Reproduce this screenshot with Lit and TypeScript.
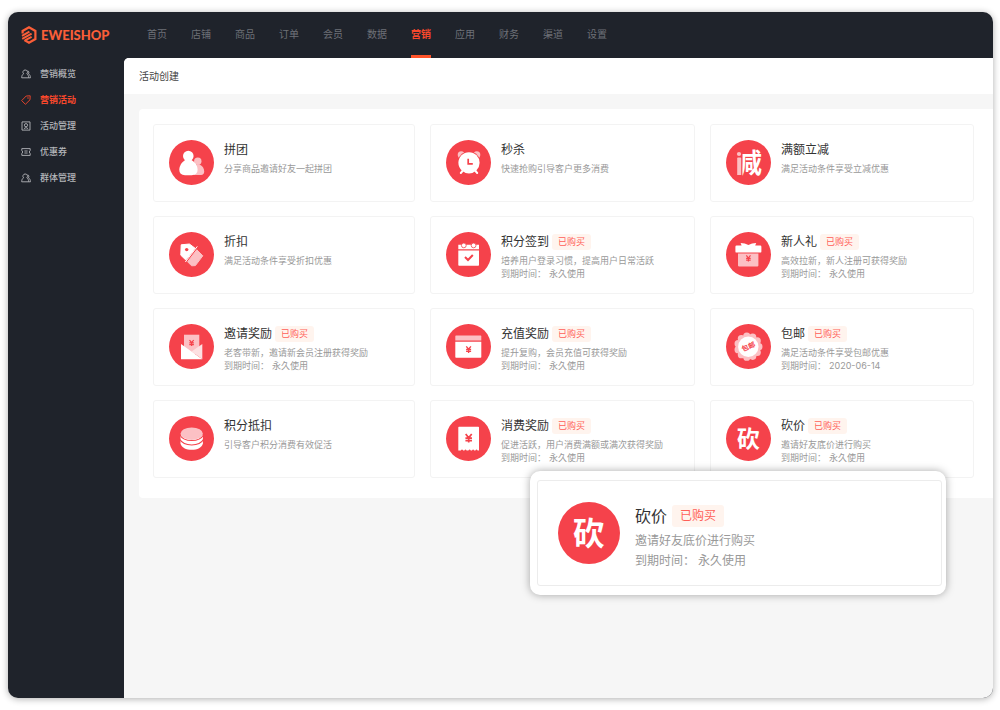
import { LitElement, html, svg, css, nothing, type TemplateResult } from "lit";
import { customElement, property } from "lit/decorators.js";
import { classMap } from "lit/directives/class-map.js";

interface Activity {
  icon: string;
  title: string;
  desc: string;
  expires?: string;
}

const NAV = ["首页", "店铺", "商品", "订单", "会员", "数据", "营销", "应用", "财务", "渠道", "设置"];

const MENU = [
  { icon: "people", label: "营销概览" },
  { icon: "tag", label: "营销活动" },
  { icon: "badge", label: "活动管理" },
  { icon: "ticket", label: "优惠券" },
  { icon: "people", label: "群体管理" },
];

const ACTIVITIES: Activity[] = [
  { icon: "group", title: "拼团", desc: "分享商品邀请好友一起拼团" },
  { icon: "clock", title: "秒杀", desc: "快速抢购引导客户更多消费" },
  { icon: "minus", title: "满额立减", desc: "满足活动条件享受立减优惠" },
  { icon: "discount", title: "折扣", desc: "满足活动条件享受折扣优惠" },
  { icon: "calendar", title: "积分签到", desc: "培养用户登录习惯，提高用户日常活跃", expires: "永久使用" },
  { icon: "gift", title: "新人礼", desc: "高效拉新，新人注册可获得奖励", expires: "永久使用" },
  { icon: "invite", title: "邀请奖励", desc: "老客带新，邀请新会员注册获得奖励", expires: "永久使用" },
  { icon: "recharge", title: "充值奖励", desc: "提升复购，会员充值可获得奖励", expires: "永久使用" },
  { icon: "shipping", title: "包邮", desc: "满足活动条件享受包邮优惠", expires: "2020-06-14" },
  { icon: "coins", title: "积分抵扣", desc: "引导客户积分消费有效促活" },
  { icon: "receipt", title: "消费奖励", desc: "促进活跃，用户消费满额或满次获得奖励", expires: "永久使用" },
  { icon: "bargain", title: "砍价", desc: "邀请好友底价进行购买", expires: "永久使用" },
];

const RED = "#f5424b";
const PINK = "#fcc0c4";

const yen = (x: number, y: number, s: number) => svg`
  <path transform="translate(${x} ${y}) scale(${s})" fill="none" stroke=${RED} stroke-width="2"
    d="M-3.5 -5 L0 -.5 L3.5 -5 M0 -.5 V5 M-3.8 -.2 H3.8 M-3.8 2.8 H3.8" />`;

const scallop = (cx: number, cy: number, n: number, r: number, bump: number) =>
  Array.from({ length: n }, (_, i) => {
    const a = (i / n) * Math.PI * 2;
    return svg`<circle cx=${(cx + r * Math.cos(a)).toFixed(2)} cy=${(cy + r * Math.sin(a)).toFixed(2)} r=${bump} fill=${PINK} />`;
  });

const ART: Record<string, () => unknown> = {
  group: () => svg`
    <circle cx="28.8" cy="21.2" r="3.7" fill=${PINK} />
    <path fill=${PINK} d="M26 26 Q28 24.6 30.5 24.6 C33.5 25.8 35.2 28.6 35.2 31.6 Q35.2 35 32 35 H25Z" />
    <circle cx="19.3" cy="16" r="5.3" fill="#fff" />
    <path fill="#fff" d="M16.2 20 H22.5 C26.5 22.3 28.6 26 28.6 29.8 Q28.6 35 22.6 35.2 H16 Q10.3 35 10.3 29.8 C10.3 26 12.6 22.3 16.2 20Z" />`,
  clock: () => svg`
    <circle cx="15.2" cy="14.8" r="3.5" fill=${PINK} /><circle cx="30.8" cy="14.8" r="3.5" fill=${PINK} />
    <circle cx="23" cy="22.8" r="11.3" fill=${RED} />
    <path d="M17.4 30 L14.8 33 M28.6 30 L31.2 33" stroke="#fff" stroke-width="2" stroke-linecap="round" />
    <circle cx="23" cy="22.8" r="10.6" fill="#fff" />
    <path d="M22.2 18.8 V23.8 H26.8" fill="none" stroke=${RED} stroke-width="1.7" />`,
  minus: () => svg`
    <clipPath id="right"><path d="M16.4 5 H42 V40 H16.4Z" /></clipPath>
    <circle cx="13" cy="14" r="2.1" fill=${PINK} />
    <path fill=${PINK} d="M11.2 18.4 Q11.2 17.6 12 17.6 H14.4 Q15.2 17.6 15.2 18.4 V35 H11.2Z" />
    <text x="22.6" y="33" class="glyph" font-size="27" fill="#fff" clip-path="url(#right)">减</text>`,
  discount: () => svg`
    <path fill="#fff" stroke="#fff" stroke-linejoin="round" d="M12.2 12.8 L20.4 12 L26 16.2 L16.8 28 L11.8 23.2Z" />
    <circle cx="17.7" cy="17.6" r="1.7" fill=${RED} />
    <path d="M28.3 14.4 L16.4 30" stroke="#fff" stroke-width="1" />
    <path fill=${PINK} stroke=${PINK} stroke-linejoin="round" d="M27.8 17.8 L33.8 23.8 L26.4 33.6 L22.6 33.8 L18.6 29.8Z" />`,
  calendar: () => svg`
    <path fill="#fff" d="M12.3 12.8 H33 V17.2 H12.3Z M12.3 18.4 H33 V33 Q33 33.8 32.2 33.8 H13.1 Q12.3 33.8 12.3 33Z" />
    <circle cx="17.8" cy="13.4" r="2.4" fill="#fff" stroke=${RED} stroke-width=".8" />
    <circle cx="27.6" cy="13.4" r="2.4" fill="#fff" stroke=${RED} stroke-width=".8" />
    <path d="M19 25 L22 28 L26.8 23" fill="none" stroke=${RED} stroke-width="2" />`,
  gift: () => svg`
    <path fill=${PINK} d="M12 21.6 H32.4 V33.6 Q32.4 34.4 31.6 34.4 H12.8 Q12 34.4 12 33.6Z" />
    <path fill="#fff" d="M10.6 13.6 H15.6 L14.6 11 Q19 11.2 22.4 13 Q25.8 11.2 30.2 11 L29.2 13.6 H34.2 Q35.4 13.6 35.4 14.8 V19.4 Q35.4 20.6 34.2 20.6 H10.6 Q9.4 20.6 9.4 19.4 V14.8 Q9.4 13.6 10.6 13.6Z" />
    ${yen(22.4, 26.4, 0.6)}`,
  invite: () => svg`
    <path fill=${PINK} d="M15 10.7 H30.3 V30 H15Z" />
    ${yen(22.6, 19, 0.6)}
    <path fill="#fff" d="M12 20 L33.3 35.3 H12Z" />
    <path fill="#fde0e2" d="M22.6 27.6 L33.3 20 V35.3Z" />`,
  recharge: () => svg`
    <path fill=${PINK} d="M10 11.6 H34.6 Q35.3 11.6 35.3 12.4 V16.4 H9.3 V12.4 Q9.3 11.6 10 11.6Z" />
    <path fill="#fff" d="M9.3 17.8 H35.3 V33 Q35.3 33.8 34.6 33.8 H10 Q9.3 33.8 9.3 33Z" />
    ${yen(22.6, 25.6, 0.66)}`,
  shipping: () => svg`
    ${scallop(22.3, 22.7, 11, 10.6, 3.6)}
    <circle cx="22.3" cy="22.7" r="12" fill=${PINK} />
    <circle cx="22.3" cy="22.7" r="10.2" fill="#fff" />
    <text class="glyph" x="22.4" y="25.2" font-size="7" fill=${RED} transform="rotate(-24 22.3 22.7)">包邮</text>`,
  coins: () => svg`
    <path fill="#fff" d="M11.5 19 V27.5 C12.5 31.6 17 33.8 22.7 33.8 C28.4 33.8 32.9 31.6 33.9 27.5 V19Z" />
    <path fill="none" stroke=${RED} stroke-width="1.1" d="M11 23.6 C13 27.4 17.4 29 22.7 29 C28 29 32.4 27.4 34.4 23.6 M11 19 C13 22.8 17.4 24.5 22.7 24.5 C28 24.5 32.4 22.8 34.4 19" />
    <ellipse cx="22.7" cy="17.7" rx="11.2" ry="6.2" fill=${PINK} />`,
  receipt: () => svg`
    <path fill="#fff" d="M13 10.7 H32.3 Q33 10.7 33 11.4 V34.6 L31.6 34.6 Q30.6 32.6 29.4 34.6 L28.2 34.6 Q27.1 32.6 26 34.6 L24.8 34.6 Q23.6 32.6 22.4 34.6 L20.6 34.6 Q19.5 32.6 18.4 34.6 L17.2 34.6 Q16 32.6 14.8 34.6 L12.3 34.6 V11.4 Q12.3 10.7 13 10.7Z" />
    ${yen(22.7, 22.3, 0.86)}`,
  bargain: () => svg`<text x="22.2" y="31" class="glyph" font-size="23" fill="#fff">砍</text>`,
};

const SMALL: Record<string, TemplateResult> = {
  people: svg`<path d="M4.2 1 a2.2 2.2 0 0 1 1.6 3.8 C7.2 5.6 7.6 7 7.6 8.8 H.7 C.7 7 1.2 5.6 2.6 4.8 A2.2 2.2 0 0 1 4.2 1Z M6.6 1.8 a1.8 1.8 0 0 1 .8 3 C8.9 5.6 9.4 7 9.4 8.8 H7.6" />`,
  tag: svg`<path d="M5.2 1 L9.2 .8 L9 4.8 L4.4 9.3 L.7 5.6Z" stroke-linejoin="round" /><circle cx="7" cy="3" r=".7" fill="currentColor" stroke="none" />`,
  badge: svg`<path d="M1 .9 H9 V9.1 H1Z M5 2.6 a1.6 1.6 0 1 1 0 3.2 a1.6 1.6 0 1 1 0 -3.2Z M3 7.6 Q5 5.6 7 7.6" />`,
  ticket: svg`<path d="M.8 1.6 H9.2 V3.4 L8.2 5 L9.2 6.6 V8.4 H.8 V6.6 L1.8 5 L.8 3.4Z M3.4 4 H6.6 M3.4 6 H6.6" />`,
};

@customElement("activity-card")
class ActivityCard extends LitElement {
  @property({ attribute: false }) item!: Activity;
  @property({ type: Boolean, reflect: true }) large = false;

  static styles = css`
    :host {
      display: block;
      box-sizing: border-box;
      min-height: 78px;
      border: 1px solid #f3f3f3;
      border-radius: 3px;
      background: #fff;
      padding: 15px 15px 13px;
      --disc: 45px;
      --title: 12px;
      --small: 9px;
      --row: 13px;
      --tag-h: 16px;
    }
    :host([large]) {
      border-color: #ececec;
      padding: 21px 20px 14px;
      --disc: 62px;
      --title: 16px;
      --small: 12px;
      --row: 20px;
      --tag-h: 22px;
    }
    .card { display: flex; gap: 10px; }
    :host([large]) .card { gap: 15px; }
    .disc { flex: none; width: var(--disc); height: var(--disc); }
    .glyph { font-family: "Noto Sans CJK SC", sans-serif; font-weight: 700; text-anchor: middle; }
    .info { min-width: 0; padding-top: 2px; }
    .head { display: flex; align-items: center; gap: 3px; margin-bottom: 4px; height: var(--tag-h); }
    :host([large]) .head { gap: 5px; }
    :host([large]) .info { padding-top: 3px; }
    h2 { margin: 0; font-size: var(--title); font-weight: 400; line-height: var(--tag-h); color: #333; }
    .tag {
      font-size: var(--small);
      line-height: var(--tag-h);
      padding: 0 6px;
      border-radius: 3px;
      background: #fff4ee;
      color: #ff5f58;
    }
    :host([large]) .tag { padding: 0 8px; }
    p { margin: 0; font-size: var(--small); line-height: var(--row); color: #999; white-space: nowrap; }
    .date { margin-left: 3px; }
  `;

  render() {
    const { icon, title, desc, expires } = this.item;
    return html`
      <article class="card">
        <svg class="disc" viewBox="0 0 45 45" aria-hidden="true">
          <circle cx="22.5" cy="22.5" r="22.5" fill=${RED} />
          ${ART[icon]()}
        </svg>
        <div class="info">
          <div class="head">
            <h2>${title}</h2>
            ${expires ? html`<span class="tag">已购买</span>` : nothing}
          </div>
          <p>${desc}</p>
          ${expires ? html`<p>到期时间：<span class="date">${expires}</span></p>` : nothing}
        </div>
      </article>
    `;
  }
}

@customElement("app-root")
class AppRoot extends LitElement {
  static styles = css`
    :host {
      display: block;
      box-sizing: border-box;
      min-height: 100vh;
      padding: 12px 7px 12px 8px;
      background: #fff;
      font-family: Inter, "Noto Sans CJK SC", sans-serif;
    }
    a { color: inherit; text-decoration: none; }
    .window {
      position: relative;
      display: flex;
      flex-direction: column;
      min-height: calc(100vh - 24px);
      border-radius: 10px;
      background: #1f232b;
      box-shadow: 0 1px 7px rgba(0, 0, 0, 0.32);
    }
    header { display: flex; height: 46px; padding-left: 13px; }
    .logo {
      display: flex;
      align-items: center;
      gap: 4px;
      width: 126px;
      color: #fb5e38;
      font: 900 13px Lato, sans-serif;
    }
    .logo svg { width: 16px; height: 18px; }
    nav.top { display: flex; gap: 24px; font-size: 10px; line-height: 44px; color: #6e7178; }
    nav.top a { box-sizing: border-box; height: 46px; border-bottom: 3px solid transparent; }
    nav.top a.on { color: #f9482c; font-weight: 700; border-color: #ff5329; }
    .body { flex: 1; display: flex; }
    aside { width: 116px; flex: none; }
    aside nav { display: flex; flex-direction: column; padding: 3px 0 0 13px; }
    aside a {
      display: flex;
      align-items: center;
      gap: 9px;
      font-size: 9px;
      font-weight: 500;
      line-height: 26px;
      color: #b4b6ba;
    }
    aside a.on { color: #f9482c; font-weight: 700; }
    aside svg { width: 10px; height: 10px; fill: none; stroke: currentColor; stroke-width: 0.9; }
    main {
      flex: 1;
      min-width: 0;
      background: #f6f6f6;
      border-radius: 5px 0 10px 0;
      overflow: hidden;
    }
    h1 {
      margin: 0;
      padding-left: 15px;
      background: #fff;
      font-size: 10px;
      font-weight: 400;
      line-height: 36px;
      color: #444;
    }
    .panel {
      display: grid;
      grid-template-columns: 262fr 265fr 264fr;
      gap: 14px 15px;
      margin: 15px 0 0 15px;
      padding: 15px 19px 20px 14px;
      border-radius: 4px 0 0 4px;
      background: #fff;
    }
    .preview {
      position: absolute;
      right: 47px;
      top: 459px;
      box-sizing: border-box;
      width: 416px;
      padding: 9px 4px 9px 7px;
      border-radius: 10px;
      background: #fff;
      box-shadow: 0 0 8px rgba(0, 0, 0, 0.34);
    }
  `;

  render() {
    return html`
      <div class="window">
        <header>
          <a class="logo" href="#">
            <svg viewBox="0 0 16 18" aria-hidden="true" fill="none" stroke="currentColor" stroke-width="2.2">
              <path d="M1.6 7.4 V5 L8 1.3 L14.4 5 V13 L8 16.7 L3.4 14" />
              <path d="M1 9.8 L8.4 5.6 M1.2 12.8 L10.6 7.6 M4.4 14.2 L10.6 10.8" stroke-width="1.9" />
            </svg>
            <span>EWEISHOP</span>
          </a>
          <nav class="top">
            ${NAV.map((n) => html`<a href="#" class=${classMap({ on: n === "营销" })}>${n}</a>`)}
          </nav>
        </header>
        <div class="body">
          <aside>
            <nav>
              ${MENU.map(
                (m) => html`<a href="#" class=${classMap({ on: m.label === "营销活动" })}>
                  <svg viewBox="0 0 10 10" aria-hidden="true">${SMALL[m.icon]}</svg><span>${m.label}</span>
                </a>`
              )}
            </nav>
          </aside>
          <main>
            <h1>活动创建</h1>
            <section class="panel">
              ${ACTIVITIES.map((a) => html`<activity-card .item=${a}></activity-card>`)}
            </section>
          </main>
        </div>
        <div class="preview">
          <activity-card large .item=${ACTIVITIES[11]}></activity-card>
        </div>
      </div>
    `;
  }
}
